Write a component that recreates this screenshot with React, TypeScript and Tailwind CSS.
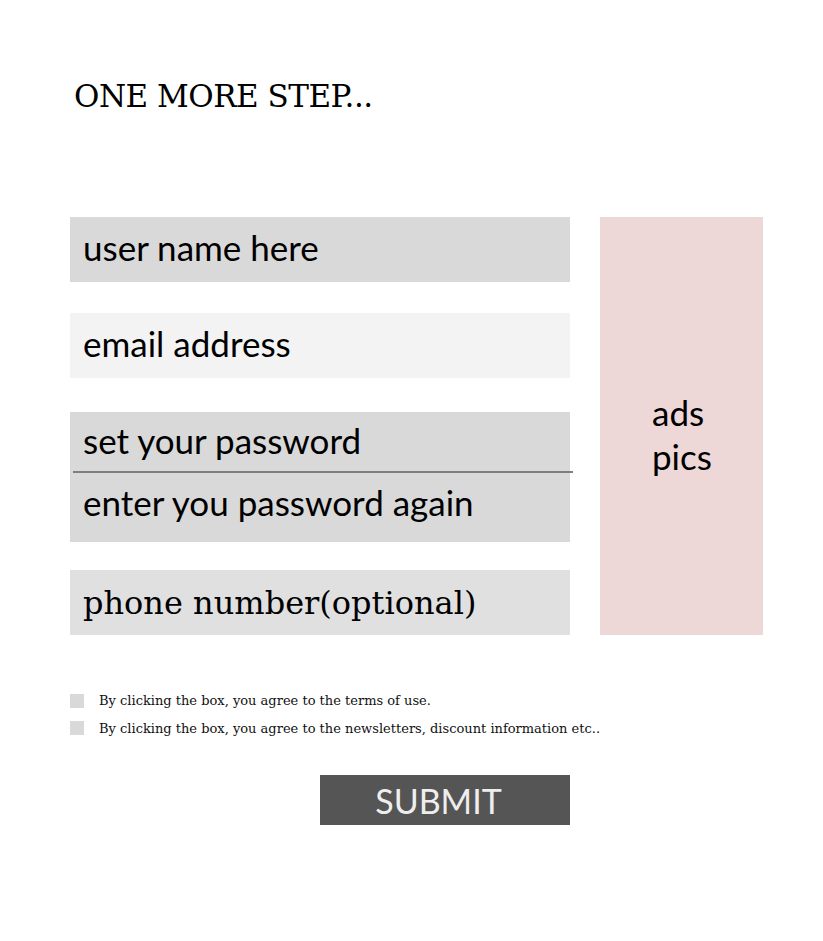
const sans = "font-['Lato','Open_Sans',sans-serif]";

function Field({ label, bg, serif }: { label: string; bg: string; serif?: boolean }) {
  return (
    <div className={`h-[65px] flex items-center pl-[13px] ${serif ? "" : "pb-[5px]"} ${bg}`}>
      <span
        className={
          serif
            ? "font-['DejaVu_Serif',serif] text-[32px] text-black"
            : `${sans} text-[35px] text-black`
        }
      >
        {label}
      </span>
    </div>
  );
}

export default function App() {
  return (
    <div className="w-[823px] h-[941px] bg-white pl-[70px] pt-[76px]">
      <h1 className="font-['DejaVu_Serif',serif] text-[31px] leading-[40px] text-black pl-[4px] tracking-[-0.5px]">
        ONE MORE STEP...
      </h1>

      <div className="flex gap-[30px] mt-[101px]">
        <div className="w-[500px] flex flex-col">
          <Field label="user name here" bg="bg-[#d9d9d9]" />
          <div className="h-[31px]" />
          <Field label="email address" bg="bg-[#f3f3f3]" />
          <div className="h-[34px]" />
          <div className="bg-[#d9d9d9] h-[130px] flex flex-col">
            <div className="h-[59px] flex items-center pl-[13px] pb-[2px]">
              <span className={`${sans} text-[35px] text-black`}>set your password</span>
            </div>
            <div className="h-[2px] bg-[#7f7f7f] ml-[3px] mr-[-3px]" />
            <div className="h-[60px] flex items-center pl-[13px] pb-[2px]">
              <span className={`${sans} text-[35px] text-black`}>enter you password again</span>
            </div>
          </div>
          <div className="h-[28px]" />
          <Field label="phone number(optional)" bg="bg-[#e0e0e0]" serif />
        </div>
        <div className="w-[163px] h-[418px] bg-[#eed7d7] flex items-center pl-[52px] pt-[16px]">
          <p className={`${sans} text-[35px] leading-[44px] text-black`}>
            ads
            <br />
            pics
          </p>
        </div>
      </div>

      <div className="mt-[56px] flex flex-col gap-[8px] font-['DejaVu_Serif',serif] text-[13px] text-[#111]">
        <label className="flex items-center gap-[15px]">
          <span className="w-[14px] h-[14px] bg-[#d9d9d9]" />
          <span>By clicking the box, you agree to the terms of use.</span>
        </label>
        <label className="flex items-center gap-[15px]">
          <span className="w-[14px] h-[14px] bg-[#d9d9d9]" />
          <span>By clicking the box, you agree to the newsletters, discount information etc..</span>
        </label>
      </div>

      <div className="mt-[37px] ml-[250px] w-[250px] h-[50px] bg-[#555555] flex items-center justify-center">
        <span className={`${sans} text-[34px] text-[#eeeeee] ml-[-13px]`}>SUBMIT</span>
      </div>
    </div>
  );
}
